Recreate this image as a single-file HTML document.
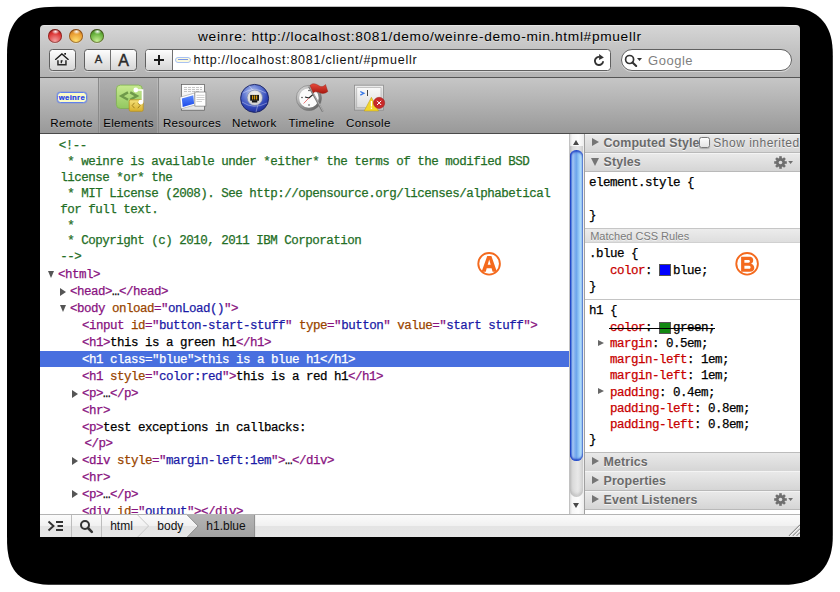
<!DOCTYPE html>
<html><head><meta charset="utf-8"><style>
*{margin:0;padding:0;box-sizing:border-box}
html,body{width:840px;height:592px;overflow:hidden;background:#fff}
body{position:relative;font-family:"Liberation Sans",sans-serif}
.a{position:absolute}
#titlebar{left:40px;top:25px;width:760px;height:53px;background:linear-gradient(#ececec 0,#d5d5d5 1.5px,#c4c4c4 45%,#b3b3b3);border-bottom:1px solid #555;border-radius:4px 4px 0 0}
#toolbar{left:40px;top:78px;width:760px;height:56px;background:linear-gradient(#c6c6c6,#999);border-bottom:1px solid #4a4a4a}
#content{left:40px;top:134px;width:760px;height:380px;background:#fff}
.m{position:absolute;-webkit-text-stroke:0.25px currentColor;font-family:"Liberation Mono",monospace;font-size:12.5px;letter-spacing:-0.5px;white-space:pre;line-height:16px;height:16px}
.t{color:rgb(136,18,128)}
.n{color:rgb(153,69,0)}
.v{color:rgb(26,26,166)}
.c{color:rgb(35,110,37)}
.p{color:rgb(200,0,0)}
.k{color:#000}
.sel{background:rgb(72,111,223)}
.sel span{color:#fff !important}
.tri{position:absolute;width:0;height:0}
.lbl{position:absolute;font-size:11.6px;color:#000;text-shadow:0 1px 0 rgba(255,255,255,.25);white-space:pre;line-height:14px;text-align:center}
.sh{position:absolute;left:585px;width:215px;background:linear-gradient(#e6e6e6,#d0d0d0);border-top:1px solid #c4c4c4;border-bottom:1px solid #b5b5b5}
.sht{position:absolute;left:18px;font-weight:bold;font-size:12.4px;color:#6a6a6a;line-height:14px;white-space:pre;text-shadow:0 1px 0 rgba(255,255,255,.6)}
.lt{border-left:5px solid transparent;border-right:5px solid transparent}
</style></head><body>
<svg class="a" style="left:0;top:0" width="840" height="592"><path d="M7.0 56.8 L7.1 49.2 L7.5 44.1 L8.0 39.8 L8.8 35.9 L9.8 32.3 L11.1 28.9 L12.6 25.9 L14.3 23.1 L16.2 20.5 L18.3 18.1 L20.7 16.0 L23.3 14.1 L26.1 12.4 L29.1 10.9 L32.5 9.6 L36.1 8.6 L40.0 7.8 L44.3 7.3 L49.4 6.9 L57.0 6.8 L782.8 6.8 L789.6 6.9 L794.5 7.3 L798.8 7.9 L802.7 8.7 L806.3 9.8 L809.7 11.1 L812.9 12.7 L815.8 14.5 L818.4 16.5 L820.9 18.7 L823.1 21.2 L825.1 23.8 L826.9 26.7 L828.5 29.9 L829.8 33.3 L830.9 36.9 L831.7 40.8 L832.3 45.1 L832.7 50.0 L832.8 56.8 L832.8 534.8 L832.7 540.8 L832.3 545.5 L831.6 549.7 L830.8 553.6 L829.6 557.3 L828.2 560.7 L826.6 563.9 L824.7 566.9 L822.6 569.7 L820.3 572.3 L817.7 574.6 L814.9 576.7 L811.9 578.6 L808.7 580.2 L805.3 581.6 L801.6 582.8 L797.7 583.6 L793.5 584.3 L788.8 584.7 L782.8 584.8 L57.0 584.8 L48.4 584.7 L43.1 584.4 L38.7 583.8 L34.8 583.1 L31.2 582.1 L28.0 581.0 L25.0 579.6 L22.3 578.0 L19.9 576.2 L17.6 574.2 L15.6 571.9 L13.8 569.5 L12.2 566.8 L10.8 563.8 L9.7 560.6 L8.7 557.0 L8.0 553.1 L7.4 548.7 L7.1 543.4 L7.0 534.8Z" fill="#000"/></svg>
<div id="titlebar" class="a"></div>
<div id="toolbar" class="a"></div>
<div id="content" class="a"></div>
<div class="m" style="left:58.8px;top:138.0px"><span class="c">&lt;!--</span></div>
<div class="m" style="left:60.2px;top:153.9px"><span class="c"> * weinre is available under *either* the terms of the modified BSD</span></div>
<div class="m" style="left:60.2px;top:169.8px"><span class="c">license *or* the</span></div>
<div class="m" style="left:60.2px;top:185.7px"><span class="c"> * MIT License (2008). See http://opensource.org/licenses/alphabetical</span></div>
<div class="m" style="left:60.2px;top:201.6px"><span class="c">for full text.</span></div>
<div class="m" style="left:60.2px;top:217.5px"><span class="c"> *</span></div>
<div class="m" style="left:60.2px;top:233.4px"><span class="c"> * Copyright (c) 2010, 2011 IBM Corporation</span></div>
<div class="m" style="left:60.2px;top:249.3px"><span class="c">--&gt;</span></div>
<div class="m" style="left:58.0px;top:267.0px"><span class="t">&lt;html&gt;</span></div>
<div class="tri" style="left:48.0px;top:271.0px;border-left:3.9px solid transparent;border-right:3.9px solid transparent;border-top:7px solid #555"></div>
<div class="m" style="left:70.0px;top:284.0px"><span class="t">&lt;head&gt;</span><span class="k">…</span><span class="t">&lt;/head&gt;</span></div>
<div class="tri" style="left:60.0px;top:287.9px;border-top:4px solid transparent;border-bottom:4px solid transparent;border-left:6.8px solid #555"></div>
<div class="m" style="left:70.0px;top:300.9px"><span class="t">&lt;body </span><span class="n">onload</span><span class="t">="</span><span class="v">onLoad()</span><span class="t">"&gt;</span></div>
<div class="tri" style="left:60.0px;top:304.9px;border-left:3.9px solid transparent;border-right:3.9px solid transparent;border-top:7px solid #555"></div>
<div class="m" style="left:82.0px;top:317.9px"><span class="t">&lt;input </span><span class="n">id</span><span class="t">="</span><span class="v">button-start-stuff</span><span class="t">" </span><span class="n">type</span><span class="t">="</span><span class="v">button</span><span class="t">" </span><span class="n">value</span><span class="t">="</span><span class="v">start stuff</span><span class="t">"&gt;</span></div>
<div class="m" style="left:82.0px;top:334.9px"><span class="t">&lt;h1&gt;</span><span class="k">this is a green h1</span><span class="t">&lt;/h1&gt;</span></div>
<div class="a sel" style="left:40px;top:351.1px;width:529px;height:15.7px"></div>
<div class="m" style="left:82.0px;top:351.9px"><span class="t" style="color:#fff">&lt;h1 </span><span class="n" style="color:#fff">class</span><span class="t" style="color:#fff">="</span><span class="v" style="color:#fff">blue</span><span class="t" style="color:#fff">"&gt;</span><span class="k" style="color:#fff">this is a blue h1</span><span class="t" style="color:#fff">&lt;/h1&gt;</span></div>
<div class="m" style="left:82.0px;top:368.8px"><span class="t">&lt;h1 </span><span class="n">style</span><span class="t">="</span><span class="v">color:red</span><span class="t">"&gt;</span><span class="k">this is a red h1</span><span class="t">&lt;/h1&gt;</span></div>
<div class="m" style="left:82.0px;top:385.8px"><span class="t">&lt;p&gt;</span><span class="k">…</span><span class="t">&lt;/p&gt;</span></div>
<div class="tri" style="left:72.0px;top:389.7px;border-top:4px solid transparent;border-bottom:4px solid transparent;border-left:6.8px solid #555"></div>
<div class="m" style="left:82.0px;top:402.8px"><span class="t">&lt;hr&gt;</span></div>
<div class="m" style="left:82.0px;top:419.7px"><span class="t">&lt;p&gt;</span><span class="k">test exceptions in callbacks:</span></div>
<div class="m" style="left:84.4px;top:435.6px"><span class="t">&lt;/p&gt;</span></div>
<div class="m" style="left:82.0px;top:452.6px"><span class="t">&lt;div </span><span class="n">style</span><span class="t">="</span><span class="v">margin-left:1em</span><span class="t">"&gt;</span><span class="k">…</span><span class="t">&lt;/div&gt;</span></div>
<div class="tri" style="left:72.0px;top:456.5px;border-top:4px solid transparent;border-bottom:4px solid transparent;border-left:6.8px solid #555"></div>
<div class="m" style="left:82.0px;top:469.6px"><span class="t">&lt;hr&gt;</span></div>
<div class="m" style="left:82.0px;top:486.5px"><span class="t">&lt;p&gt;</span><span class="k">…</span><span class="t">&lt;/p&gt;</span></div>
<div class="tri" style="left:72.0px;top:490.4px;border-top:4px solid transparent;border-bottom:4px solid transparent;border-left:6.8px solid #555"></div>
<div class="m" style="left:82.0px;top:503.5px"><span class="t">&lt;div </span><span class="n">id</span><span class="t">="</span><span class="v">output</span><span class="t">"&gt;</span><span class="t">&lt;/div&gt;</span></div>
<div class="a" style="left:569px;top:134px;width:16px;height:380px;background:linear-gradient(90deg,#dcdcdc,#f6f6f6 15%,#fdfdfd 60%,#ededed);border-left:1px solid #c2c2c2;border-right:1.5px solid #9c9c9c"></div>
<div class="a" style="left:570px;top:146px;width:13px;height:351px;border-radius:0 0 6.5px 6.5px;background:linear-gradient(90deg,#c4c4c4,#dadada 20%,#e8e8e8 60%,#d4d4d4);box-shadow:inset 0 -3px 3px rgba(150,150,150,.35)"></div>
<div class="tri" style="left:573.2px;top:139.6px;border-left:3.4px solid transparent;border-right:3.4px solid transparent;border-bottom:5.4px solid #4a4a4a"></div>
<div class="tri" style="left:573.4px;top:503.2px;border-left:3.4px solid transparent;border-right:3.4px solid transparent;border-top:5.4px solid #4a4a4a"></div>
<div class="a" style="left:569.8px;top:150.2px;width:12.8px;height:311px;border-radius:6.4px;background:linear-gradient(90deg,#1a3cc4 0%,#5a86e0 10%,#a6c8f4 22%,#7eaeee 38%,#6ea6ec 50%,#9ccff8 72%,#b6e0fc 86%,#7aa6dc 100%);box-shadow:inset 0 2px 2px rgba(20,50,190,.8),inset 0 -2px 2px rgba(20,50,190,.8)"></div>
<div class="a" style="left:584px;top:134px;width:1px;height:380px;background:#a0a0a0"></div>
<div class="a" style="left:585px;top:133.5px;width:215px;height:19.2px;background:linear-gradient(#e9e9e9,#d5d5d5);border-top:1px solid #f4f4f4;border-bottom:1px solid #b9b9b9"></div>
<div class="tri" style="left:591.7px;top:138.1px;border-top:4.5px solid transparent;border-bottom:4.5px solid transparent;border-left:7.7px solid #757575"></div>
<div class="a" style="left:603.5px;top:135.0px;font-weight:bold;font-size:12.4px;letter-spacing:0.12px;line-height:16px;color:#6a6a6a;white-space:pre;text-shadow:0 1px 0 rgba(255,255,255,.7)">Computed Style</div>
<div class="a" style="left:585px;top:152.7px;width:215px;height:19px;background:linear-gradient(#e9e9e9,#d5d5d5);border-top:1px solid #f4f4f4;border-bottom:1px solid #b9b9b9"></div>
<div class="tri" style="left:591.2px;top:158.2px;border-left:4.3px solid transparent;border-right:4.3px solid transparent;border-top:8.2px solid #757575"></div>
<div class="a" style="left:603.5px;top:154.2px;font-weight:bold;font-size:12.4px;letter-spacing:0.12px;line-height:16px;color:#6a6a6a;white-space:pre;text-shadow:0 1px 0 rgba(255,255,255,.7)">Styles</div>
<svg class="a" style="left:774px;top:155.5px" width="20" height="13" viewBox="0 0 20 13"><g transform="translate(6.5 6.5)" fill="#6f6f6f"><circle r="4.6"/><g id="teeth"><rect x="-1.3" y="-6.3" width="2.6" height="3" transform="rotate(0)"/><rect x="-1.3" y="-6.3" width="2.6" height="3" transform="rotate(45)"/><rect x="-1.3" y="-6.3" width="2.6" height="3" transform="rotate(90)"/><rect x="-1.3" y="-6.3" width="2.6" height="3" transform="rotate(135)"/><rect x="-1.3" y="-6.3" width="2.6" height="3" transform="rotate(180)"/><rect x="-1.3" y="-6.3" width="2.6" height="3" transform="rotate(225)"/><rect x="-1.3" y="-6.3" width="2.6" height="3" transform="rotate(270)"/><rect x="-1.3" y="-6.3" width="2.6" height="3" transform="rotate(315)"/></g></g><circle cx="6.5" cy="6.5" r="1.8" fill="#dedede"/><path d="M14.2 5 L19 5 L16.6 8 Z" fill="#6f6f6f"/></svg>
<div class="a" style="left:698.7px;top:136.7px;width:11.5px;height:11.5px;border:1px solid #7a7a7a;border-radius:2.5px;background:linear-gradient(#fdfdfd,#e4e4e4);box-shadow:0 0.5px 1px rgba(0,0,0,.2)"></div>
<div class="a" style="left:713.3px;top:134.5px;font-size:12px;letter-spacing:0.5px;line-height:16px;color:#6a6a6a;white-space:pre;text-shadow:0 1px 0 rgba(255,255,255,.7)">Show inherited</div>
<div class="m" style="left:589.0px;top:175.0px"><span class="k">element.style {</span></div>
<div class="m" style="left:589.0px;top:207.7px"><span class="k">}</span></div>
<div class="a" style="left:585px;top:228px;width:215px;height:14.5px;background:linear-gradient(#ececec,#dedede);border-top:1px solid #c6c6c6;border-bottom:1px solid #d0d0d0"></div>
<div class="a" style="left:590.2px;top:228.5px;font-size:11px;line-height:14px;color:#7a7a7a;white-space:pre;text-shadow:0 1px 0 rgba(255,255,255,.6)">Matched CSS Rules</div>
<div class="m" style="left:589.0px;top:246.0px"><span class="k">.blue {</span></div>
<div class="m" style="left:610.0px;top:263.0px"><span class="p">color</span><span class="k">:</span></div>
<div class="a" style="left:659px;top:264px;width:12px;height:12px;background:#0000ff;border:1px solid #555"></div>
<div class="m" style="left:673.0px;top:263.0px"><span class="k">blue;</span></div>
<div class="m" style="left:589.0px;top:279.0px"><span class="k">}</span></div>
<div class="a" style="left:585px;top:299px;width:215px;height:1px;background:#c4c4c4"></div>
<div class="m" style="left:589.0px;top:303.0px"><span class="k">h1 {</span></div>
<div class="m" style="left:610.0px;top:320.3px"><span class="p">color</span><span class="k">:</span></div>
<div class="a" style="left:659px;top:322.1px;width:12px;height:12px;background:#118811;border:1px solid #555"></div>
<div class="m" style="left:673.0px;top:320.3px"><span class="k">green;</span></div>
<div class="a" style="left:609px;top:328.2px;width:106px;height:1.2px;background:#000"></div>
<div class="m" style="left:610.0px;top:336.2px"><span class="p">margin</span><span class="k">: 0.5em;</span></div>
<div class="tri" style="left:598.3px;top:340.0px;border-top:3.9px solid transparent;border-bottom:3.9px solid transparent;border-left:6.6px solid #686868"></div>
<div class="m" style="left:610.0px;top:352.3px"><span class="p">margin-left</span><span class="k">: 1em;</span></div>
<div class="m" style="left:610.0px;top:368.4px"><span class="p">margin-left</span><span class="k">: 1em;</span></div>
<div class="m" style="left:610.0px;top:384.5px"><span class="p">padding</span><span class="k">: 0.4em;</span></div>
<div class="tri" style="left:598.3px;top:388.3px;border-top:3.9px solid transparent;border-bottom:3.9px solid transparent;border-left:6.6px solid #686868"></div>
<div class="m" style="left:610.0px;top:400.6px"><span class="p">padding-left</span><span class="k">: 0.8em;</span></div>
<div class="m" style="left:610.0px;top:416.7px"><span class="p">padding-left</span><span class="k">: 0.8em;</span></div>
<div class="m" style="left:589.0px;top:431.8px"><span class="k">}</span></div>
<div class="a" style="left:585px;top:452px;width:215px;height:19.5px;background:linear-gradient(#e9e9e9,#d5d5d5);border-top:1px solid #f4f4f4;border-bottom:1px solid #b9b9b9"></div>
<div class="tri" style="left:591.7px;top:456.6px;border-top:4.5px solid transparent;border-bottom:4.5px solid transparent;border-left:7.7px solid #757575"></div>
<div class="a" style="left:603.5px;top:453.5px;font-weight:bold;font-size:12.4px;letter-spacing:0.12px;line-height:16px;color:#6a6a6a;white-space:pre;text-shadow:0 1px 0 rgba(255,255,255,.7)">Metrics</div>
<div class="a" style="left:585px;top:452px;width:215px;height:1px;background:#bcbcbc"></div>
<div class="a" style="left:585px;top:471.3px;width:215px;height:19.5px;background:linear-gradient(#e9e9e9,#d5d5d5);border-top:1px solid #f4f4f4;border-bottom:1px solid #b9b9b9"></div>
<div class="tri" style="left:591.7px;top:475.90000000000003px;border-top:4.5px solid transparent;border-bottom:4.5px solid transparent;border-left:7.7px solid #757575"></div>
<div class="a" style="left:603.5px;top:472.8px;font-weight:bold;font-size:12.4px;letter-spacing:0.12px;line-height:16px;color:#6a6a6a;white-space:pre;text-shadow:0 1px 0 rgba(255,255,255,.7)">Properties</div>
<div class="a" style="left:585px;top:490.6px;width:215px;height:19.2px;background:linear-gradient(#e9e9e9,#d5d5d5);border-top:1px solid #f4f4f4;border-bottom:1px solid #b9b9b9"></div>
<div class="tri" style="left:591.7px;top:495.20000000000005px;border-top:4.5px solid transparent;border-bottom:4.5px solid transparent;border-left:7.7px solid #757575"></div>
<div class="a" style="left:603.5px;top:492.1px;font-weight:bold;font-size:12.4px;letter-spacing:0.12px;line-height:16px;color:#6a6a6a;white-space:pre;text-shadow:0 1px 0 rgba(255,255,255,.7)">Event Listeners</div>
<svg class="a" style="left:774px;top:493.40000000000003px" width="20" height="13" viewBox="0 0 20 13"><g transform="translate(6.5 6.5)" fill="#6f6f6f"><circle r="4.6"/><g id="teeth"><rect x="-1.3" y="-6.3" width="2.6" height="3" transform="rotate(0)"/><rect x="-1.3" y="-6.3" width="2.6" height="3" transform="rotate(45)"/><rect x="-1.3" y="-6.3" width="2.6" height="3" transform="rotate(90)"/><rect x="-1.3" y="-6.3" width="2.6" height="3" transform="rotate(135)"/><rect x="-1.3" y="-6.3" width="2.6" height="3" transform="rotate(180)"/><rect x="-1.3" y="-6.3" width="2.6" height="3" transform="rotate(225)"/><rect x="-1.3" y="-6.3" width="2.6" height="3" transform="rotate(270)"/><rect x="-1.3" y="-6.3" width="2.6" height="3" transform="rotate(315)"/></g></g><circle cx="6.5" cy="6.5" r="1.8" fill="#dedede"/><path d="M14.2 5 L19 5 L16.6 8 Z" fill="#6f6f6f"/></svg>
<div class="a" style="left:40px;top:514px;width:760px;height:23px;background:linear-gradient(#fbfbfb,#f1f1f1 48%,#e4e4e4 52%,#e6e6e6);border-top:1px solid #b4b4b4"></div>
<svg class="a" style="left:46.5px;top:520px" width="18" height="12" viewBox="0 0 18 12"><path d="M1.5 1.5 L6.5 6 L1.5 10.5" fill="none" stroke="#333" stroke-width="1.9"/><path d="M9 2 H16 M10.5 6 H16 M9 10 H16" stroke="#333" stroke-width="1.8"/></svg>
<div class="a" style="left:70.5px;top:515px;width:1px;height:22px;background:#bdbdbd"></div>
<svg class="a" style="left:79.3px;top:519px" width="15" height="15" viewBox="0 0 15 15"><circle cx="6" cy="6" r="4" fill="none" stroke="#333" stroke-width="2"/><path d="M9 9 L12.8 12.8" stroke="#333" stroke-width="2.6" stroke-linecap="round"/></svg>
<div class="a" style="left:101px;top:515px;width:1px;height:22px;background:#bdbdbd"></div>
<svg class="a" style="left:130px;top:515px" width="130" height="22" viewBox="0 0 130 22"><path d="M57.3 0 H124.6 V22 H57.3 L68.1 11 Z" fill="url(#gCr)"/><defs><linearGradient id="gCr" x1="0" y1="0" x2="0" y2="1"><stop offset="0" stop-color="#b4b4b4"/><stop offset="1" stop-color="#a2a2a2"/></linearGradient></defs><path d="M57.3 0 L68.1 11 L57.3 22" fill="none" stroke="#8c8c8c" stroke-width="1"/><path d="M124.6 0 V22" stroke="#8c8c8c" stroke-width="1"/><path d="M7.7 0 L18.6 11 L7.7 22" fill="none" stroke="#c8c8c8" stroke-width="1"/></svg>
<div class="a" style="left:110.2px;top:519px;font-size:12px;line-height:14px;color:#111;white-space:pre">html</div>
<div class="a" style="left:157.3px;top:519px;font-size:12px;line-height:14px;color:#111;white-space:pre">body</div>
<div class="a" style="left:206.3px;top:519px;font-size:12px;line-height:14px;color:#111;white-space:pre">h1.blue</div>
<svg class="a" style="left:786px;top:522px" width="14" height="14" viewBox="0 0 14 14"><path d="M3 14 L14 3 M6.8 14 L14 6.8 M10.6 14 L14 10.6" stroke="#8e8e8e" stroke-width="1.1"/><path d="M4 14 L14 4 M7.8 14 L14 7.8 M11.6 14 L14 11.6" stroke="#fafafa" stroke-width="0.8"/></svg>
<div class="a" style="left:48px;top:28.8px;width:14px;height:14px;border-radius:50%;background:radial-gradient(circle at 50% 85%,#f4a0a0 0%,#dc3434 58%,#7e1010 100%);box-shadow:inset 0 0 0 0.9px rgba(60,20,10,.45),0 0.5px 1px rgba(255,255,255,.6)"></div>
<div class="a" style="left:51.5px;top:29.8px;width:7px;height:4px;border-radius:50%;background:radial-gradient(ellipse at 50% 40%,rgba(255,255,255,.95),rgba(255,255,255,0) 80%)"></div>
<div class="a" style="left:69px;top:28.8px;width:14px;height:14px;border-radius:50%;background:radial-gradient(circle at 50% 85%,#ffe070 0%,#e89a30 58%,#9a500a 100%);box-shadow:inset 0 0 0 0.9px rgba(60,20,10,.45),0 0.5px 1px rgba(255,255,255,.6)"></div>
<div class="a" style="left:72.5px;top:29.8px;width:7px;height:4px;border-radius:50%;background:radial-gradient(ellipse at 50% 40%,rgba(255,255,255,.95),rgba(255,255,255,0) 80%)"></div>
<div class="a" style="left:90px;top:28.8px;width:14px;height:14px;border-radius:50%;background:radial-gradient(circle at 50% 85%,#c8f094 0%,#62ad38 58%,#2a6012 100%);box-shadow:inset 0 0 0 0.9px rgba(60,20,10,.45),0 0.5px 1px rgba(255,255,255,.6)"></div>
<div class="a" style="left:93.5px;top:29.8px;width:7px;height:4px;border-radius:50%;background:radial-gradient(ellipse at 50% 40%,rgba(255,255,255,.95),rgba(255,255,255,0) 80%)"></div>
<div class="a" style="left:198px;top:27.3px;font-size:13.7px;letter-spacing:0.69px;line-height:20px;color:#000;white-space:pre;text-shadow:0 1px 0 rgba(255,255,255,.35)">weinre: http://localhost:8081/demo/weinre-demo-min.html#pmuellr</div>
<div class="a" style="left:48.5px;top:49.2px;width:27.5px;height:21.5px;background:linear-gradient(#fdfdfd,#e9e9e9 50%,#d6d6d6);border:1px solid #606060;border-radius:3.5px;box-shadow:0 1px 0 rgba(255,255,255,.45)"></div>
<svg class="a" style="left:50px;top:48px" width="24" height="22" viewBox="50 48 24 22"><path d="M55.6 59.4 L61.9 53.9 L68.2 59.4" fill="none" stroke="#1a1a1a" stroke-width="1.35" stroke-linecap="round"/><rect x="64.3" y="53" width="1.7" height="1.7" fill="#1a1a1a"/><path d="M57.95 60.2 V64.75 H65.95 V60.2" fill="none" stroke="#2a2a2a" stroke-width="1.5"/><path d="M61.3 63.3 V60.8 H62.6" fill="none" stroke="#1a1a1a" stroke-width="1.2"/></svg>
<div class="a" style="left:84.2px;top:49.2px;width:52.4px;height:21.5px;background:linear-gradient(#fdfdfd,#e9e9e9 50%,#d6d6d6);border:1px solid #606060;border-radius:3.5px;box-shadow:0 1px 0 rgba(255,255,255,.45)"></div>
<div class="a" style="left:110px;top:50px;width:1px;height:20px;background:#707070"></div>
<div class="a" style="left:93px;top:51px;width:11px;font-size:11.2px;line-height:16px;color:#2a2a2a;-webkit-text-stroke:0.35px #2a2a2a;text-align:center">A</div>
<div class="a" style="left:116px;top:51px;width:15px;font-size:16px;line-height:19px;color:#2a2a2a;-webkit-text-stroke:0.45px #2a2a2a;text-align:center">A</div>
<div class="a" style="left:145.2px;top:49.2px;width:466.2px;height:21.5px;background:#fff;border:1px solid #606060;border-radius:3.5px;box-shadow:0 1px 0 rgba(255,255,255,.45)"></div>
<div class="a" style="left:146.2px;top:50.2px;width:27.2px;height:19.5px;background:linear-gradient(#fdfdfd,#e9e9e9 50%,#d6d6d6);border-right:1px solid #707070;border-radius:2.5px 0 0 2.5px"></div>
<div class="a" style="left:154.3px;top:59px;width:10px;height:2.2px;background:#1a1a1a"></div>
<div class="a" style="left:158.2px;top:55px;width:2.2px;height:10px;background:#1a1a1a"></div>
<div class="a" style="left:175.2px;top:57.2px;width:15.4px;height:5.6px;border-radius:3px;background:#fbf9dc;border:1px solid #a9c2f2"></div>
<div class="a" style="left:178.3px;top:59.4px;width:9.4px;height:1.1px;background:#7a96e4"></div>
<div class="a" style="left:193.5px;top:52.3px;font-size:12.5px;letter-spacing:0.755px;line-height:17px;color:#111;white-space:pre">http://localhost:8081/client/#pmuellr</div>
<svg class="a" style="left:590px;top:51px" width="18" height="18" viewBox="590 51 18 18"><path d="M603.1 61.2 A4.1 4.1 0 1 1 599.6 56.9" fill="none" stroke="#333" stroke-width="1.9"/><path d="M599.1 53.9 L603.9 57.5 L599.1 60 Z" fill="#333"/></svg>
<div class="a" style="left:620.5px;top:49.2px;width:171.2px;height:21.5px;background:#fff;border:1px solid #606060;border-radius:11px;box-shadow:0 1px 0 rgba(255,255,255,.45)"></div>
<svg class="a" style="left:624px;top:54px" width="20" height="14" viewBox="0 0 20 14"><circle cx="5.6" cy="5.5" r="4" fill="none" stroke="#333" stroke-width="1.7"/><path d="M8.5 8.4 L12.2 12" stroke="#333" stroke-width="2.1" stroke-linecap="round"/><path d="M13 4 L18 4 L15.5 7 Z" fill="#333"/></svg>
<div class="a" style="left:648.1px;top:51.5px;font-size:13px;letter-spacing:0.5px;line-height:17px;color:#7f7f7f;white-space:pre">Google</div>
<div class="a" style="left:98px;top:78px;width:61px;height:55px;background:linear-gradient(#b0b0b0,#8c8c8c);border-left:1px solid #8a8a8a;border-right:1px solid #8a8a8a;box-shadow:inset 1px 0 0 rgba(255,255,255,.15),inset -1px 0 0 rgba(255,255,255,.15)"></div>
<div class="lbl" style="left:31.5px;top:115.5px;width:80px;letter-spacing:0.3px">Remote</div>
<div class="lbl" style="left:88.5px;top:115.5px;width:80px;letter-spacing:0.3px">Elements</div>
<div class="lbl" style="left:152px;top:115.5px;width:80px;letter-spacing:0.3px">Resources</div>
<div class="lbl" style="left:214.3px;top:115.5px;width:80px;letter-spacing:0.3px">Network</div>
<div class="lbl" style="left:271.5px;top:115.5px;width:80px;letter-spacing:0.3px">Timeline</div>
<div class="lbl" style="left:328.4px;top:115.5px;width:80px;letter-spacing:0.3px">Console</div>
<div class="a" style="left:56.5px;top:92.2px;width:30.8px;height:11.2px;border-radius:3.5px;background:#fcfcc8;border:1.5px solid #5f80ee;box-shadow:0 0 0 0.6px rgba(120,140,220,.6)"></div>
<div class="a" style="left:56.5px;top:92px;width:30.8px;font-size:7.7px;font-weight:bold;line-height:12px;color:#1f40e8;text-align:center;letter-spacing:0.3px;-webkit-text-stroke:0.2px #1f40e8">weinre</div>
<svg class="a" style="left:114px;top:83px" width="32" height="30" viewBox="0 0 32 30"><defs><linearGradient id="gE" x1="0" y1="0" x2="0" y2="1"><stop offset="0" stop-color="#c8ea90"/><stop offset="1" stop-color="#92c860"/></linearGradient><linearGradient id="gY" x1="0" y1="0" x2="0" y2="1"><stop offset="0" stop-color="#f6e27a"/><stop offset="1" stop-color="#d8b02c"/></linearGradient></defs><rect x="2.4" y="2.1" width="25.9" height="23.4" rx="4" fill="url(#gE)" stroke="#7eae50" stroke-width="0.8"/><path d="M14 9.4 L7.3 13.1 L14 16.8" fill="none" stroke="#6f9a4a" stroke-width="2.4"/><path d="M16.2 9.4 L22.9 13.1 L16.2 16.8" fill="none" stroke="#6f9a4a" stroke-width="2.4"/><rect x="15.2" y="16.8" width="14" height="11.5" rx="1.5" fill="url(#gY)" stroke="#b89020" stroke-width="0.8"/><path d="M20.5 19.8 L18.2 22.5 L20.5 25.2 M23.8 19.8 L26.1 22.5 L23.8 25.2" fill="none" stroke="#9a7a18" stroke-width="0.9"/><path d="M21.8 7 H28.5 V19" fill="none" stroke="#fff" stroke-width="1.7"/><circle cx="21.8" cy="7" r="2.4" fill="#fff"/><circle cx="26.8" cy="19.2" r="2.4" fill="#fff"/></svg>
<svg class="a" style="left:172px;top:80px" width="42" height="36" viewBox="172 80 42 36"><defs><linearGradient id="gB" x1="0" y1="0" x2="0" y2="1"><stop offset="0" stop-color="#5c8cff"/><stop offset="1" stop-color="#1c48e8"/></linearGradient><linearGradient id="gD" x1="0" y1="0" x2="0" y2="1"><stop offset="0" stop-color="#ffffff"/><stop offset="1" stop-color="#e4e4e4"/></linearGradient></defs><rect x="181.6" y="84.4" width="22.8" height="25.8" fill="url(#gD)" stroke="#5a5a5a" stroke-width="0.7"/><path d="M184 87.5 H202 M184 89.5 H202 M184 91.5 H200" stroke="#b8b8b8" stroke-width="0.8" stroke-dasharray="3 1"/><path d="M179.9 97.3 L194.5 93 L195.6 104.9 L181.1 108.8 Z" fill="#fff" stroke="#8a8a8a" stroke-width="0.5"/><path d="M181.8 98.6 L193.3 95.2 L194.1 103.8 L182.7 107 Z" fill="url(#gB)"/><rect x="194.9" y="92" width="11" height="14.1" fill="#fff" stroke="#6a6a6a" stroke-width="0.6"/><path d="M196.5 95.3 H204.5 M196.5 97.5 H204.5 M196.5 99.5 H204.5 M196.5 101.5 H202" stroke="#c4c4c4" stroke-width="0.8"/></svg>
<svg class="a" style="left:238px;top:82px" width="34" height="34" viewBox="238 82 34 34"><defs><radialGradient id="gN" cx="0.42" cy="0.3" r="0.75"><stop offset="0" stop-color="#c8d2f0"/><stop offset="0.35" stop-color="#6f86d8"/><stop offset="0.7" stop-color="#3248b8"/><stop offset="1" stop-color="#1c2a90"/></radialGradient><radialGradient id="gC" cx="0.5" cy="0.4" r="0.6"><stop offset="0" stop-color="#fafafa"/><stop offset="1" stop-color="#cfcfcf"/></radialGradient></defs><ellipse cx="254.6" cy="98.4" rx="14" ry="14" fill="url(#gN)" stroke="#1a2260" stroke-width="0.9"/><path d="M243 93 Q254 86 266 93 M242 102 Q254 110 267 103 M249 85.5 Q262 98 256 112" fill="none" stroke="rgba(255,255,255,.45)" stroke-width="0.8"/><circle cx="254.8" cy="97.8" r="7.7" fill="url(#gC)" stroke="#6a78a8" stroke-width="0.6"/><rect x="250.2" y="94.9" width="8.8" height="5.8" fill="#151515"/><rect x="251.9" y="100.4" width="5.4" height="2.1" fill="#151515"/><rect x="252.1" y="95.5" width="1.1" height="4" fill="#e8a810"/><rect x="254.1" y="95.5" width="1.1" height="4" fill="#e8a810"/><rect x="256.1" y="95.5" width="1.1" height="4" fill="#e8a810"/></svg>
<svg class="a" style="left:290px;top:80px" width="42" height="34" viewBox="290 80 42 34"><defs><linearGradient id="gR" x1="0" y1="0" x2="1" y2="1"><stop offset="0" stop-color="#e4e4e4"/><stop offset="0.5" stop-color="#9a9a9a"/><stop offset="1" stop-color="#5a5a5a"/></linearGradient><linearGradient id="gF" x1="0" y1="0" x2="0" y2="1"><stop offset="0" stop-color="#e84a3a"/><stop offset="1" stop-color="#a81810"/></linearGradient></defs><circle cx="308.9" cy="98" r="11.2" fill="#fbfbfb" stroke="url(#gR)" stroke-width="2.8"/><circle cx="308.9" cy="98" r="12.6" fill="none" stroke="#6a6a6a" stroke-width="0.5"/><circle cx="302" cy="97.5" r="0.8" fill="#444"/><circle cx="309" cy="105" r="0.8" fill="#444"/><circle cx="309" cy="90.5" r="0.8" fill="#444"/><path d="M308.9 98 L313 94.5 M308.9 98 L305 97" stroke="#222" stroke-width="1.1"/><path d="M308.9 98 L303.6 103.5" stroke="#e04040" stroke-width="0.7"/><path d="M309 86.5 L322.8 111.6" stroke="#7a7a7a" stroke-width="2"/><path d="M309.4 86.2 L323 111" stroke="#cfcfcf" stroke-width="0.6"/><path d="M310 85.5 C313 82,317 84.5,319.5 86 C322 87.5,324 86,325.5 84.5 L327.8 91.5 C325.5 93.5,322.5 94,320 92.8 C317.5 91.5,314.5 91.5,313.2 93 Z" fill="url(#gF)" stroke="#8a1a10" stroke-width="0.4"/></svg>
<svg class="a" style="left:352px;top:83px" width="36" height="30" viewBox="352 83 36 30"><defs><linearGradient id="gK" x1="0" y1="0" x2="0" y2="1"><stop offset="0" stop-color="#ececec"/><stop offset="1" stop-color="#c4c4c4"/></linearGradient><linearGradient id="gW" x1="0" y1="0" x2="0" y2="1"><stop offset="0" stop-color="#fafafa"/><stop offset="1" stop-color="#dcdcdc"/></linearGradient></defs><rect x="354.5" y="85.2" width="29" height="25" fill="url(#gK)" stroke="#8c8c8c" stroke-width="0.8"/><rect x="356.8" y="87.7" width="24.2" height="20" fill="url(#gW)" stroke="#a8a8a8" stroke-width="0.6"/><path d="M360.3 91.5 L363.8 93.3 L360.3 95.1" fill="none" stroke="#3a7ae8" stroke-width="1.4"/><rect x="367" y="90" width="0.9" height="6" fill="#333"/><path d="M371.4 97.3 L378.6 111 H364.2 Z" fill="#f2d62a" stroke="#b8961a" stroke-width="0.5"/><rect x="370.8" y="101" width="1.3" height="5.5" fill="#fff"/><rect x="370.8" y="107.5" width="1.3" height="1.4" fill="#fff"/><circle cx="379.1" cy="102.9" r="5.6" fill="#c82828" stroke="#9a1a1a" stroke-width="0.5"/><path d="M377 100.8 L381.2 105 M381.2 100.8 L377 105" stroke="#fff" stroke-width="1"/></svg>
<svg class="a" style="left:474px;top:250px" width="30" height="30" viewBox="0 0 30 30"><circle cx="15.1" cy="13.8" r="10.8" fill="none" stroke="#f46a1e" stroke-width="1.9"/><path fill-rule="evenodd" fill="#f46a1e" d="M7.6 21.8 L13.2 6.1 H17.4 L22.9 21.8 H18.6 L17.6 18.3 H12.7 L11.8 21.8 Z M13.7 14.8 H16.7 L15.2 9.6 Z"/></svg>
<svg class="a" style="left:732px;top:250px" width="30" height="30" viewBox="0 0 30 30"><circle cx="15.1" cy="13.8" r="10.8" fill="none" stroke="#f46a1e" stroke-width="1.9"/><path fill-rule="evenodd" fill="#f46a1e" d="M9.1 6.8 H17.3 C20.5 6.8 21.2 8.6 21.2 10.3 C21.2 12 20.3 13.2 19 13.8 C21 14.4 22.3 15.8 22.3 17.9 C22.3 20.2 20.8 21.8 17.6 21.8 H9.1 Z M12.4 9.9 H16.6 C17.5 9.9 17.9 10.6 17.9 11.3 C17.9 12 17.5 12.7 16.6 12.7 H12.4 Z M12.4 15.7 H17.2 C18.2 15.7 18.6 16.5 18.6 17.25 C18.6 18 18.2 18.8 17.2 18.8 H12.4 Z"/></svg>
</body></html>
